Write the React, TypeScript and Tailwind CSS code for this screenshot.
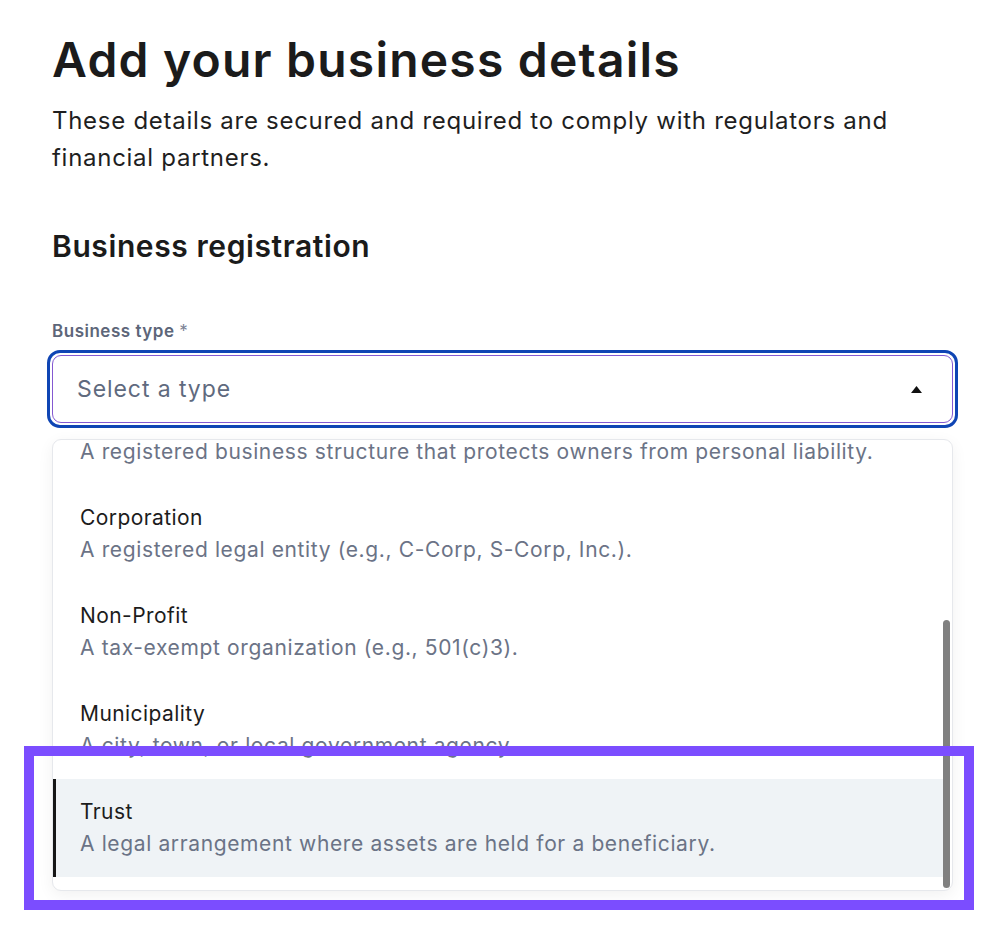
const businessTypes = [
  { title: 'LLC', description: 'A registered business structure that protects owners from personal liability.' },
  { title: 'Corporation', description: 'A registered legal entity (e.g., C-Corp, S-Corp, Inc.).' },
  { title: 'Non-Profit', description: 'A tax-exempt organization (e.g., 501(c)3).' },
  { title: 'Municipality', description: 'A city, town, or local government agency.' },
  { title: 'Trust', description: 'A legal arrangement where assets are held for a beneficiary.' },
];

export default function App() {
  const active = 'Trust';

  return (
    <div className="min-h-screen bg-white font-['Inter',sans-serif] text-[#1b1b1b]">
      <div className="relative pl-[52px] pr-[49px] pt-[30px] pb-10">
        <h1 className="text-[48px] leading-[60px] font-semibold tracking-[0.025em]">
          Add your business details
        </h1>
        <p className="mt-[12px] text-[24px] leading-[37px] tracking-[0.03em] text-[#1f1f1f]">
          These details are secured and required to comply with regulators and financial partners.
        </p>

        {/* Business registration */}
        <h2 className="mt-[50px] text-[30px] leading-[40px] font-semibold tracking-[0.02em]">
          Business registration
        </h2>

        <label className="mt-[53px] block text-[17px] leading-[24px] font-semibold tracking-[0.03em] text-[#5d6679]">
          Business type <span className="font-normal text-[#7a8294]">*</span>
        </label>

        <div className="mt-[7px] -mx-[5px] rounded-[13px] border-[3px] border-[#0f45b4] p-[2px]">
          <div className="flex h-[68px] items-center justify-between rounded-[9px] border border-[#8459d1] pl-[24px] pr-[30px]">
            <span className="text-[23px] tracking-[0.04em] text-[#5f6a7e]">Select a type</span>
            <svg width="11" height="7" viewBox="0 0 11 7" className="mt-[1px]">
              <path d="M5.5 0L11 7H0z" fill="#111" />
            </svg>
          </div>
        </div>

        {/* Dropdown (scrolled to the bottom) */}
        <div className="relative mt-[11px] h-[452px] overflow-hidden rounded-[9px] border border-[#e6e8ec] bg-white shadow-[0_4px_16px_rgba(0,0,0,0.06)]">
          <div className="-mt-[65px] py-[12px] pr-[3px]">
            {businessTypes.map((t) => (
              <div
                key={t.title}
                className={
                  t.title === active
                    ? 'border-l-[3px] border-[#161616] bg-[#eff3f6] py-[17px] pl-[24px]'
                    : 'border-l-[3px] border-transparent py-[17px] pl-[24px]'
                }
              >
                <div className="text-[21px] leading-[32px] tracking-[0.02em] text-[#1c1c1c]">{t.title}</div>
                <div className="text-[21px] leading-[32px] tracking-[0.03em] text-[#6b7386]">{t.description}</div>
              </div>
            ))}
          </div>
          {/* scrollbar thumb */}
          <div className="absolute right-[2px] bottom-[2px] h-[268px] w-[7px] rounded-full bg-[#808080]" />
        </div>

        {/* highlight annotation */}
        <div className="pointer-events-none absolute left-[24px] top-[746px] h-[164px] w-[950px] border-[10px] border-[#7b4dff]" />
      </div>
    </div>
  );
}
